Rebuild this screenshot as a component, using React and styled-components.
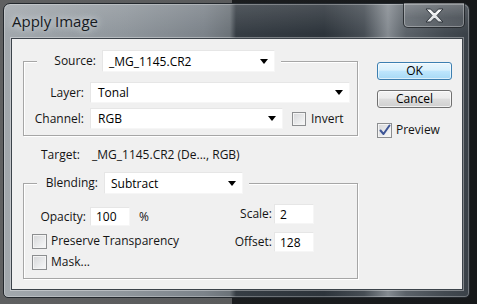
import React from 'react';
import styled, { createGlobalStyle } from 'styled-components';

const GlobalStyle = createGlobalStyle`
   html, body {
      margin: 0;
      padding: 0;
   }
   body {
      width: 477px;
      height: 304px;
      overflow: hidden;
      background: linear-gradient(to right, #5f6061 0, #5a5b5c 232px, #1b1d1f 232px, #16181a 100%);
      font-family: "Open Sans", "Noto Sans", sans-serif;
      font-size: 12px;
      color: #141414;
   }
`

const Desktop = styled.div`
   width: 477px;
   height: 304px;
   box-sizing: border-box;
   padding: 3px 7px 6px 3px;
`

const Window = styled.div`
   height: 100%;
   box-sizing: border-box;
   display: flex;
   flex-direction: column;
   border: 1px solid #23282d;
   border-radius: 7px 7px 5px 5px;
   padding: 0 6px 7px 7px;
   box-shadow: inset 0 0 0 1px rgba(255, 255, 255, .28);
   background:
      linear-gradient(to bottom, rgba(255, 255, 255, .14), rgba(255, 255, 255, 0) 30px),
      linear-gradient(to right,
         #a2a8ad 0, #8f969c 120px, #7c838a 200px, #6b7278 226px,
         #363d44 232px, #2d343b 320px, #464d54 360px, #858b91 384px,
         #5b6269 402px, #434a51 440px, #3a4148 100%);
`

const TitleBar = styled.div`
   height: 34px;
   display: flex;
   justify-content: space-between;
   align-items: flex-start;
`

const Title = styled.div`
   padding: 7px 0 0 1px;
   font-family: "Open Sans", "Noto Sans", sans-serif;
   font-size: 15px;
   line-height: 20px;
   color: #161a1e;
   text-shadow: 0 0 6px rgba(235, 240, 245, .8), 0 0 12px rgba(235, 240, 245, .6);
`

const CloseButton = styled.div`
   width: 62px;
   height: 25px;
   box-sizing: border-box;
   margin: -1px -2px 0 0;
   display: flex;
   align-items: center;
   justify-content: center;
   border: 1px solid rgba(20, 24, 28, .75);
   border-top: none;
   border-radius: 0 0 5px 5px;
   background: linear-gradient(to bottom, rgba(255, 255, 255, .16), rgba(255, 255, 255, .05) 60%, rgba(255, 255, 255, .1));
   box-shadow: inset 0 0 0 1px rgba(255, 255, 255, .3);
`

const Client = styled.div`
   flex: 1;
   display: flex;
   align-items: flex-start;
   padding: 11px 10px 0 11px;
   background: #f0f0f0;
   border: 1px solid #3c434a;
   box-shadow: 0 0 0 1px rgba(255, 255, 255, .35);
`

const MainColumn = styled.div`
   width: 335px;
   display: flex;
   flex-direction: column;
`

const Group = styled.fieldset`
   margin: 0;
   min-width: 0;
   padding: ${props => props.pad};
   border: 1px solid #a6a6a6;
   box-shadow: inset 1px 1px 0 #fff, 1px 1px 0 #fff;
`

const Legend = styled.legend`
   margin-left: 13px;
   padding: 0 6px;
   background: #f0f0f0;
`

const Row = styled.div`
   display: flex;
   align-items: center;
   gap: ${props => props.gap || 6}px;
   margin-top: ${props => props.top || 0}px;
`

const Label = styled.span`
   width: ${props => props.w}px;
   flex: none;
   text-align: ${props => props.left ? 'left' : 'right'};
   white-space: nowrap;
   line-height: 16px;
`

const Combo = styled.div`
   width: ${props => props.w}px;
   height: ${props => props.h || 21}px;
   box-sizing: border-box;
   flex: none;
   display: flex;
   align-items: center;
   justify-content: space-between;
   padding: 0 6px 0 ${props => props.indent || 6}px;
   background: #fff;
   border: 1px solid #e6e6e6;
   border-right-color: #f6f6f6;
   border-bottom-color: #f6f6f6;
   color: #000;
   white-space: nowrap;
   &::after {
      content: '';
      border-left: 4px solid transparent;
      border-right: 4px solid transparent;
      border-top: 5px solid #000;
   }
`

const NumberField = styled.div`
   width: 40px;
   height: ${props => props.h || 20}px;
   box-sizing: border-box;
   flex: none;
   display: flex;
   align-items: center;
   padding-left: 5px;
   background: #fff;
   border: 1px solid #e6e6e6;
   border-right-color: #f6f6f6;
   border-bottom-color: #f6f6f6;
   color: #000;
`

const CheckLabel = styled.label`
   display: flex;
   align-items: center;
   gap: ${props => props.gap || 5}px;
   margin-left: ${props => props.offset || 0}px;
   height: 16px;
   line-height: 16px;
   white-space: nowrap;
`

const Box = styled.span`
   width: ${props => props.size || 15}px;
   height: ${props => props.size || 15}px;
   box-sizing: border-box;
   flex: none;
   display: flex;
   align-items: center;
   justify-content: center;
   border: 1px solid #8c8e90;
   background: linear-gradient(135deg, #d5d6d8, #eeeff0 70%, #f8f8f8);
   box-shadow: inset 0 0 0 1px #f4f4f4;
`

const TargetRow = styled.div`
   display: flex;
   margin: 11px 0 9px 18px;
   line-height: 16px;
`

const BlendGrid = styled.div`
   display: flex;
   justify-content: space-between;
`

const LeftStack = styled.div`
   display: flex;
   flex-direction: column;
   padding: 13px 0 0 8px;
`

const RightStack = styled.div`
   display: flex;
   flex-direction: column;
   padding-top: 10px;
`

const ButtonColumn = styled.div`
   width: 76px;
   margin-left: 19px;
   padding-top: 12px;
   display: flex;
   flex-direction: column;
`

const Button = styled.div`
   height: 18px;
   box-sizing: border-box;
   margin-bottom: 10px;
   display: flex;
   align-items: center;
   justify-content: center;
   border-radius: 3px;
   border: 1px solid ${props => props.main ? '#3c7fb1' : '#707070'};
   background: ${props => props.main
      ? 'linear-gradient(to bottom, #eaf6fd 0, #d9f0fc 45%, #bee6fd 50%, #a7d9f5 100%)'
      : 'linear-gradient(to bottom, #f2f2f2 0, #ebebeb 45%, #dddddd 50%, #cfcfcf 100%)'};
   box-shadow: inset 0 0 0 1px ${props => props.main ? 'rgba(255, 255, 255, .6)' : 'rgba(255, 255, 255, .7)'};
   color: #000;
   line-height: 16px;
`

const CloseIcon = () => (
   <svg width="19" height="15" viewBox="0 0 19 15">
      <defs>
         <linearGradient id="xg" x1="0" y1="0" x2="0" y2="1">
            <stop offset="0" stopColor="#ffffff" />
            <stop offset="1" stopColor="#d6d9dc" />
         </linearGradient>
      </defs>
      <polygon
         points="1,1 5.5,1 9.5,5 13.5,1 18,1 12,7.5 18,14 13.5,14 9.5,10 5.5,14 1,14 7,7.5"
         fill="url(#xg)"
         stroke="#30363c"
         strokeWidth="1"
         strokeLinejoin="round"
      />
   </svg>
)

const Check = () => (
   <svg width="12" height="12" viewBox="0 0 12 12">
      <path d="M1.5 6.5 L4.5 10 L10.5 1.5" fill="none" stroke="#3d5596" strokeWidth="2" strokeLinecap="round" strokeLinejoin="round" />
   </svg>
)

const App = () => {
   return (
      <>
         <GlobalStyle />
         <Desktop>
            <Window>
               <TitleBar>
                  <Title>Apply Image</Title>
                  <CloseButton><CloseIcon /></CloseButton>
               </TitleBar>
               <Client>
                  <MainColumn>
                     <Group pad="10px 7px 6px 0">
                        <Legend>
                           <Row>
                              <Label w={53}>Source:</Label>
                              <Combo w={173} h={22}>_MG_1145.CR2</Combo>
                           </Row>
                        </Legend>
                        <Row>
                           <Label w={60}>Layer:</Label>
                           <Combo w={260} indent={7}>Tonal</Combo>
                        </Row>
                        <Row top={5}>
                           <Label w={60}>Channel:</Label>
                           <Combo w={193} indent={7}>RGB</Combo>
                           <CheckLabel offset={3}>
                              <Box size={14} />
                              Invert
                           </CheckLabel>
                        </Row>
                     </Group>

                     <TargetRow>
                        <Label w={51} left>Target:</Label>
                        <span>_MG_1145.CR2 (De..., RGB)</span>
                     </TargetRow>

                     <Group pad="0 43px 8px 0">
                        <Legend>
                           <Row>
                              <Label w={55}>Blending:</Label>
                              <Combo w={139} h={22}>Subtract</Combo>
                           </Row>
                        </Legend>
                        <BlendGrid>
                           <LeftStack>
                              <Row gap={4}>
                                 <Label w={54}>Opacity:</Label>
                                 <NumberField h={19}>100</NumberField>
                                 <span style={{ marginLeft: 5 }}>%</span>
                              </Row>
                              <Row top={7}>
                                 <CheckLabel gap={4}>
                                    <Box />
                                    Preserve Transparency
                                 </CheckLabel>
                              </Row>
                              <Row top={5}>
                                 <CheckLabel gap={4}>
                                    <Box />
                                    Mask...
                                 </CheckLabel>
                              </Row>
                           </LeftStack>
                           <RightStack>
                              <Row gap={2}>
                                 <Label w={44}>Scale:</Label>
                                 <NumberField>2</NumberField>
                              </Row>
                              <Row gap={2} top={8}>
                                 <Label w={44}>Offset:</Label>
                                 <NumberField>128</NumberField>
                              </Row>
                           </RightStack>
                        </BlendGrid>
                     </Group>
                  </MainColumn>

                  <ButtonColumn>
                     <Button main>OK</Button>
                     <Button>Cancel</Button>
                     <CheckLabel gap={4} style={{ marginTop: 4 }}>
                        <Box><Check /></Box>
                        Preview
                     </CheckLabel>
                  </ButtonColumn>
               </Client>
            </Window>
         </Desktop>
      </>
   );
}

export default App;
